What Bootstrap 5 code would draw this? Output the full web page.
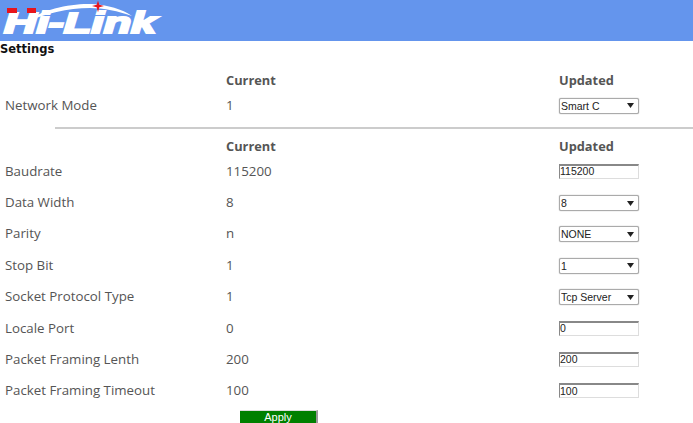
<!DOCTYPE html>
<html lang="en">

<head>
    <meta charset="UTF-8">
    <meta name="viewport" content="width=device-width, initial-scale=1.0">
    <title>Settings</title>
    <link href="https://cdn.jsdelivr.net/npm/bootstrap@5.3.3/dist/css/bootstrap.min.css" rel="stylesheet">
    <style>
        body {
            font-family: "Open Sans", "Noto Sans", sans-serif;
            font-size: 13.3px;
            color: #555;
            overflow: hidden;
        }
        .top-bar {
            height: 41px;
            background-color: #6495ed;
        }
        .page-title {
            font-family: "DejaVu Sans", sans-serif;
            font-size: 11.5px;
            font-weight: 700;
            color: #111;
            line-height: 17px;
            margin: 0;
        }
        .set-row {
            display: grid;
            grid-template-columns: 221px 333px 1fr;
            align-items: center;
            padding-left: 5px;
            height: 31.4px;
        }
        .set-head {
            font-size: 12.8px;
            font-weight: 700;
            height: 18px;
            margin: 13px 0 1px;
        }
        .set-rule {
            height: 2px;
            background-color: #ccc;
            margin: 6px 0 7.6px 55px;
        }
        .set-rule + .set-head {
            margin-top: 0;
        }
        .set-select, .set-input {
            display: block;
            width: 80px;
            height: 16px;
            font-family: "Liberation Sans", sans-serif;
            font-size: 10.5px;
            color: #222;
            background-color: #fff;
            outline: 0;
        }
        .set-select {
            appearance: none;
            padding: 0 1px;
            border: 1px solid #aaa;
            border-radius: 2px;
            box-shadow: 0 0 1px #888;
            background-image: url("data:image/svg+xml,%3Csvg xmlns='http://www.w3.org/2000/svg' width='7' height='5'%3E%3Cpath d='M0 0h7L3.5 5z' fill='%23222'/%3E%3C/svg%3E");
            background-repeat: no-repeat;
            background-position: right 4px center;
        }
        .set-input {
            height: 15px;
            margin-bottom: 1px;
            padding: 0;
            border: 1px solid #ddd;
            border-top: 2px solid #888;
            border-left: 1px solid #888;
            border-radius: 0;
        }
        .apply-btn {
            display: block;
            width: 78px;
            height: 13px;
            margin: 3px 0 0 240px;
            padding: 0;
            border: 0;
            border-top: 1px solid #ddd;
            border-right: 2px solid #999;
            border-radius: 0;
            background-color: #008000;
            color: #fff;
            font-family: "Liberation Sans", sans-serif;
            font-size: 11px;
            line-height: 12px;
        }
        .logo-word {
            font-family: "Liberation Sans", sans-serif;
            font-size: 30px;
            font-weight: 700;
            font-style: italic;
            fill: #fff;
            stroke: #fff;
            stroke-width: 2.2px;
        }
    </style>
</head>

<body>
    <div class="top-bar">
        <svg class="d-block" width="170" height="41" viewBox="0 0 170 41">
            <text class="logo-word" x="4" y="33" textLength="152" lengthAdjust="spacingAndGlyphs">Hi-Link</text>
            <rect x="7" y="8" width="10" height="5" fill="#e8141c"/>
            <rect x="27" y="8" width="9" height="5" fill="#e8141c"/>
            <path d="M26 22C42 9 72 3 92 4C108 5 122 9 132 16C118 11 104 8 90 8C68 8 44 14 26 22z" fill="#fff"/>
            <path d="M98 0.500l1.300 4.200 4.700 1.300-4.700 1.300-1.300 5-1.300-5-4.700-1.300 4.700-1.300z" fill="#e8141c"/>
        </svg>
    </div>
    <p class="page-title">Settings</p>

    <div class="set-row set-head">
        <span></span><span>Current</span><span>Updated</span>
    </div>
    <div class="set-row">
        <span>Network Mode</span><span>1</span>
        <select class="set-select"><option>Smart C</option></select>
    </div>
    <div class="set-rule"></div>
    <div class="set-row set-head">
        <span></span><span>Current</span><span>Updated</span>
    </div>
    <div class="set-row">
        <span>Baudrate</span><span>115200</span>
        <input class="set-input" type="text" value="115200">
    </div>
    <div class="set-row">
        <span>Data Width</span><span>8</span>
        <select class="set-select"><option>8</option></select>
    </div>
    <div class="set-row">
        <span>Parity</span><span>n</span>
        <select class="set-select"><option>NONE</option></select>
    </div>
    <div class="set-row">
        <span>Stop Bit</span><span>1</span>
        <select class="set-select"><option>1</option></select>
    </div>
    <div class="set-row">
        <span>Socket Protocol Type</span><span>1</span>
        <select class="set-select"><option>Tcp Server</option></select>
    </div>
    <div class="set-row">
        <span>Locale Port</span><span>0</span>
        <input class="set-input" type="text" value="0">
    </div>
    <div class="set-row">
        <span>Packet Framing Lenth</span><span>200</span>
        <input class="set-input" type="text" value="200">
    </div>
    <div class="set-row">
        <span>Packet Framing Timeout</span><span>100</span>
        <input class="set-input" type="text" value="100">
    </div>
    <button type="button" class="btn apply-btn">Apply</button>

    <script src="https://cdn.jsdelivr.net/npm/bootstrap@5.3.3/dist/js/bootstrap.bundle.min.js"></script>
</body>

</html>
